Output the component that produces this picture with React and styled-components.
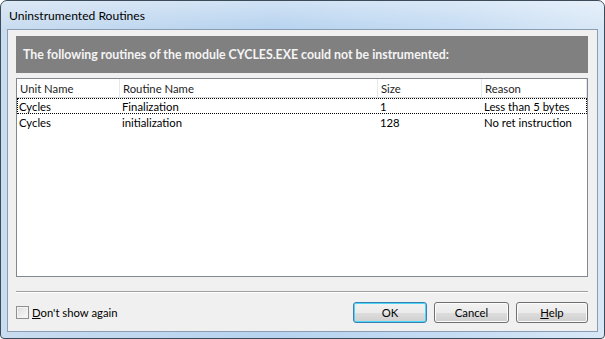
import React from "react";
import styled, { createGlobalStyle } from "styled-components";

const GlobalStyle = createGlobalStyle`
  html, body {
    margin: 0;
    padding: 0;
    background: #ffffff;
  }
  body {
    font-family: Lato, "Noto Sans", sans-serif;
    font-size: 11.3px;
    color: #000;
  }
`;

const Window = styled.div`
  width: 605px;
  height: 339px;
  box-sizing: border-box;
  border: 1px solid #3d4a57;
  border-radius: 7px 7px 4px 4px;
  background: linear-gradient(90deg, #c9dcf0 0%, #b7d3ef 45%, #c5dcf3 75%, #d9e8f7 100%);
  display: flex;
  flex-direction: column;
  overflow: hidden;
`;

const TitleBar = styled.div`
  height: 28px;
  display: flex;
  align-items: center;
  padding-left: 8px;
  font-size: 12.1px;
  color: #000;
  background: linear-gradient(180deg, rgba(255,255,255,0.35), rgba(255,255,255,0));
`;

const Frame = styled.div`
  flex: 1;
  display: flex;
  padding: 0 6px 6px 6px;
`;

const Client = styled.div`
  flex: 1;
  background: #f0f0f0;
  border: 1px solid #8a9db3;
  display: flex;
  flex-direction: column;
  padding: 6px 9px 7px 8px;
`;

const Banner = styled.div`
  height: 37px;
  background: #808080;
  color: #f4f4f4;
  font-weight: bold;
  font-size: 12.35px;
  display: flex;
  align-items: center;
  padding-left: 7px;
`;

const List = styled.div`
  margin-top: 5px;
  height: 199px;
  box-sizing: border-box;
  border: 1px solid #828790;
  background: #fff;
`;

const HeaderRow = styled.div`
  display: grid;
  grid-template-columns: ${(p) => p.cols};
  height: 18px;
  border-bottom: 1px solid #d5d5d5;
`;

const HeaderCell = styled.div`
  display: flex;
  align-items: center;
  padding-left: 3px;
  border-right: 1px solid #e3e8ee;
  color: #1e1e1e;
`;

const Row = styled.div`
  display: grid;
  grid-template-columns: ${(p) => p.cols};
  height: 16px;
  box-sizing: border-box;
  border: 1px dotted ${(p) => (p.focused ? "#000" : "transparent")};
`;

const Cell = styled.div`
  display: flex;
  align-items: center;
  padding-left: ${(p) => (p.first ? "1px" : "2px")};
  white-space: nowrap;
`;

const Separator = styled.div`
  margin-top: 14px;
  height: 0;
  border-top: 1px solid #a0a0a0;
  border-bottom: 1px solid #ffffff;
`;

const Footer = styled.div`
  margin-top: 9px;
  display: flex;
  align-items: center;
`;

const CheckLabel = styled.label`
  display: flex;
  align-items: center;
  gap: 3px;
  flex: 1;
`;

const Box = styled.span`
  width: 11px;
  height: 11px;
  border: 1px solid #8e8f8f;
  background: linear-gradient(135deg, #dcdcdc, #fbfbfb);
  box-shadow: inset 0 0 0 1px #f4f4f4;
`;

const Button = styled.button`
  width: ${(p) => p.w}px;
  height: 21px;
  margin-left: 7px;
  font-family: inherit;
  font-size: 11.3px;
  color: #000;
  border-radius: 3px;
  border: 1px solid ${(p) => (p.primary ? "#3c7fb1" : "#707070")};
  background: linear-gradient(180deg, #f2f2f2 0%, #ebebeb 50%, #dddddd 51%, #cfcfcf 100%);
  box-shadow: inset 0 0 0 1px ${(p) => (p.primary ? "#48d7f9" : "#fbfbfb")};
  padding: 0;
`;

const headCols = "103px 258px 104px 1fr";
const rowCols = "102px 258px 104px 1fr";

const rows = [
  { unit: "Cycles", routine: "Finalization", size: "1", reason: "Less than 5 bytes" },
  { unit: "Cycles", routine: "initialization", size: "128", reason: "No ret instruction" },
];

export default function App() {
  return (
    <>
      <GlobalStyle />
      <Window>
        <TitleBar>Uninstrumented Routines</TitleBar>
        <Frame>
          <Client>
            <Banner>The following routines of the module CYCLES.EXE could not be instrumented:</Banner>
            <List>
              <HeaderRow cols={headCols}>
                <HeaderCell>Unit Name</HeaderCell>
                <HeaderCell>Routine Name</HeaderCell>
                <HeaderCell>Size</HeaderCell>
                <HeaderCell>Reason</HeaderCell>
              </HeaderRow>
              {rows.map((r, i) => (
                <Row key={i} cols={rowCols} focused={i === 0}>
                  <Cell first>{r.unit}</Cell>
                  <Cell>{r.routine}</Cell>
                  <Cell>{r.size}</Cell>
                  <Cell>{r.reason}</Cell>
                </Row>
              ))}
            </List>
            <Separator />
            <Footer>
              <CheckLabel>
                <Box />
                <span>
                  <u>D</u>on't show again
                </span>
              </CheckLabel>
              <Button primary w={74}>OK</Button>
              <Button w={75}>Cancel</Button>
              <Button w={72}>
                <u>H</u>elp
              </Button>
            </Footer>
          </Client>
        </Frame>
      </Window>
    </>
  );
}
